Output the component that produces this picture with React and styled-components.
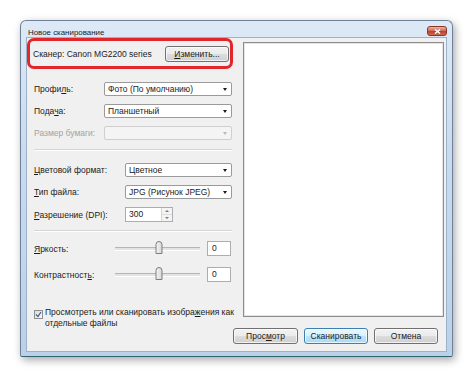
import React from 'react';
import styled, { createGlobalStyle } from 'styled-components';

const GlobalStyle = createGlobalStyle`
    html, body {
        margin: 0;
        padding: 0;
        background: #FFFFFF;
    }
    body {
        font-family: "Liberation Sans", "DejaVu Sans", sans-serif;
        font-size: 8.5px;
        color: #1b1b1b;
    }
`;

const Page = styled.div`
    width: 474px;
    height: 378px;
    box-sizing: border-box;
    padding: 20px 0 0 20px;
`;

const Window = styled.div`
    width: 433px;
    height: 337px;
    box-sizing: border-box;
    display: flex;
    flex-direction: column;
    padding: 0 5px 4px 5px;
    border: 1px solid #6f8099;
    border-bottom-color: #2f6470;
    border-radius: 6px 6px 2px 2px;
    background: linear-gradient(180deg, #dde9f6 0%, #c9dbef 40%, #bbd1ea 100%);
    box-shadow: 2px 3px 9px rgba(0, 0, 0, 0.35);
`;

const TitleBar = styled.div`
    height: 18px;
    display: flex;
    align-items: flex-end;
    justify-content: space-between;
    padding-left: 2px;
`;

const Title = styled.span`
    font-size: 7.9px;
    line-height: 9px;
    color: #1c1c1c;
`;

const CloseButton = styled.div`
    width: 20px;
    height: 10px;
    margin-bottom: 1px;
    box-sizing: border-box;
    border: 1px solid #8c3426;
    border-radius: 3px;
    background: linear-gradient(180deg, #eab3a5 0%, #d2705d 45%, #c0402c 55%, #d06a52 100%);
    display: flex;
    align-items: center;
    justify-content: center;
`;

const Client = styled.div`
    flex: 1;
    display: flex;
    flex-direction: column;
    background: #f0f0f0;
    border: 1px solid #9fb1c8;
`;

const Main = styled.div`
    flex: 1;
    display: flex;
    padding: 0 2px 0 0;
`;

const LeftPanel = styled.div`
    width: 207px;
    display: flex;
    flex-direction: column;
`;

const ScannerBox = styled.div`
    height: 31px;
    box-sizing: border-box;
    border: 3px solid #e2262b;
    border-radius: 7px;
    display: flex;
    align-items: center;
    justify-content: space-between;
    padding: 0 1px 0 3px;
    margin-right: 1px;
`;

const Button = styled.div`
    width: ${p => p.$w || 65}px;
    height: 16px;
    box-sizing: border-box;
    display: flex;
    align-items: center;
    justify-content: center;
    border: 1px solid ${p => p.$default ? '#3c7fb1' : '#707070'};
    border-radius: 3px;
    background: ${p => p.$default
        ? 'linear-gradient(180deg, #eaf6fd 0%, #d9f0fc 50%, #bee6fd 51%, #a7d9f5 100%)'
        : 'linear-gradient(180deg, #f2f2f2 0%, #ebebeb 50%, #dddddd 51%, #cfcfcf 100%)'};
    box-shadow: inset 0 0 0 1px rgba(255, 255, 255, 0.7);
    color: #1b1b1b;
`;

const Form = styled.div`
    display: flex;
    flex-direction: column;
    padding: 0 2px 0 7px;
`;

const Section = styled.div`
    display: flex;
    flex-direction: column;
    gap: ${p => p.$gap}px;
    margin-top: ${p => p.$top}px;
`;

const Row = styled.div`
    display: grid;
    grid-template-columns: ${p => p.$label}px 1fr;
    align-items: center;
    height: ${p => p.$h || 14}px;
`;

const Label = styled.span`
    color: ${p => p.$disabled ? '#a3a3a3' : '#1b1b1b'};
    white-space: nowrap;
`;

const Select = styled.div`
    height: 14px;
    box-sizing: border-box;
    display: flex;
    align-items: center;
    justify-content: space-between;
    padding: 0 4px 0 3px;
    border: 1px solid ${p => p.$disabled ? '#cfcfcf' : '#9a9a9a'};
    border-radius: 2px;
    background: ${p => p.$disabled ? '#f4f4f4' : '#ffffff'};
`;

const Arrow = styled.span`
    width: 0;
    height: 0;
    border-left: 2.5px solid transparent;
    border-right: 2.5px solid transparent;
    border-top: 3px solid ${p => p.$disabled ? '#b8b8b8' : '#1b1b1b'};
`;

const Separator = styled.div`
    height: 0;
    border-top: 1px solid #d5d5d5;
    border-bottom: 1px solid #ffffff;
    margin-top: ${p => p.$top}px;
`;

const SpinBox = styled.div`
    width: 48px;
    height: 15px;
    box-sizing: border-box;
    display: flex;
    border: 1px solid #abadb3;
    background: #ffffff;
`;

const SpinText = styled.span`
    flex: 1;
    padding-left: 3px;
    line-height: 13px;
`;

const SpinButtons = styled.div`
    width: 10px;
    display: flex;
    flex-direction: column;
    border-left: 1px solid #d6d6d6;
    background: #f4f4f4;
`;

const SpinHalf = styled.div`
    flex: 1;
    display: flex;
    align-items: center;
    justify-content: center;
    border-bottom: ${p => p.$top ? '1px solid #dcdcdc' : 'none'};
`;

const SpinArrow = styled.span`
    width: 0;
    height: 0;
    border-left: 2px solid transparent;
    border-right: 2px solid transparent;
    ${p => p.$up ? 'border-bottom: 2px solid #7a7a7a;' : 'border-top: 2px solid #7a7a7a;'}
`;

const SliderRow = styled.div`
    display: grid;
    grid-template-columns: 74px 85px 24px;
    column-gap: 7px;
    align-items: center;
    height: 15px;
`;

const Track = styled.div`
    position: relative;
    height: 2px;
    border-top: 1px solid #b5b5b5;
    border-bottom: 1px solid #ffffff;
    background: #e3e3e3;
`;

const Thumb = styled.svg`
    position: absolute;
    left: 40px;
    top: -7px;
`;

const NumberBox = styled.div`
    height: 15px;
    box-sizing: border-box;
    border: 1px solid #abadb3;
    background: #ffffff;
    padding-left: 4px;
    line-height: 13px;
`;

const CheckRow = styled.div`
    display: flex;
    align-items: flex-start;
    gap: 2px;
    margin-top: 25px;
    line-height: 10.5px;
`;

const CheckText = styled.span`
    white-space: nowrap;
`;

const CheckBox = styled.div`
    width: 9px;
    height: 9px;
    margin-top: 3px;
    flex: none;
    box-sizing: border-box;
    border: 1px solid #8e8f8f;
    background: linear-gradient(135deg, #dcdcdc, #f8f8f8);
    display: flex;
    align-items: center;
    justify-content: center;
`;

const Preview = styled.div`
    flex: 1;
    margin: 4px 0 0 9px;
    height: 275px;
    box-sizing: border-box;
    border: 1px solid #8d8d8d;
    box-shadow: inset 0 0 0 1px #e4e4e4;
    background: #ffffff;
`;

const Footer = styled.div`
    display: flex;
    justify-content: flex-end;
    gap: 6px;
    padding: 0 8px 7px 0;
`;

const u = (s) => <u>{s}</u>;

const Slider = ({ label }) => (
    <SliderRow>
        <Label>{label}</Label>
        <Track>
            <Thumb width="8" height="13" viewBox="0 0 8 13">
                <defs>
                    <linearGradient id="thumbg" x1="0" y1="0" x2="1" y2="0">
                        <stop offset="0" stopColor="#f6f6f6" />
                        <stop offset="1" stopColor="#d6d6d6" />
                    </linearGradient>
                </defs>
                <path d="M1 3.5 Q1 0.5 4 0.5 Q7 0.5 7 3.5 L7 12.5 L1 12.5 Z"
                      fill="url(#thumbg)" stroke="#7d7d7d" strokeWidth="1" />
            </Thumb>
        </Track>
        <NumberBox>0</NumberBox>
    </SliderRow>
);

const App = () => (
    <Page>
        <GlobalStyle />
        <Window>
            <TitleBar>
                <Title>Новое сканирование</Title>
                <CloseButton>
                    <svg width="7" height="5" viewBox="0 0 7 5">
                        <path d="M1 0.5 L6 4.5 M6 0.5 L1 4.5" stroke="#ffffff" strokeWidth="1.4" />
                    </svg>
                </CloseButton>
            </TitleBar>
            <Client>
                <Main>
                    <LeftPanel>
                        <ScannerBox>
                            <span>Сканер: Canon MG2200 series</span>
                            <Button $w={64}>{u('И')}зменить...</Button>
                        </ScannerBox>
                        <Form>
                            <Section $gap={8} $top={13}>
                                <Row $label={70}>
                                    <Label>Профи{u('л')}ь:</Label>
                                    <Select>Фото (По умолчанию)<Arrow /></Select>
                                </Row>
                                <Row $label={70}>
                                    <Label>Пода{u('ч')}а:</Label>
                                    <Select>Планшетный<Arrow /></Select>
                                </Row>
                                <Row $label={70}>
                                    <Label $disabled>Размер бумаги:</Label>
                                    <Select $disabled><span /><Arrow $disabled /></Select>
                                </Row>
                            </Section>
                            <Separator $top={9} />
                            <Section $gap={8} $top={12}>
                                <Row $label={91}>
                                    <Label>{u('Ц')}ветовой формат:</Label>
                                    <Select>Цветное<Arrow /></Select>
                                </Row>
                                <Row $label={91}>
                                    <Label>{u('Т')}ип файла:</Label>
                                    <Select>JPG (Рисунок JPEG)<Arrow /></Select>
                                </Row>
                                <Row $label={91} $h={15}>
                                    <Label>{u('Р')}азрешение (DPI):</Label>
                                    <SpinBox>
                                        <SpinText>300</SpinText>
                                        <SpinButtons>
                                            <SpinHalf $top><SpinArrow $up /></SpinHalf>
                                            <SpinHalf><SpinArrow /></SpinHalf>
                                        </SpinButtons>
                                    </SpinBox>
                                </Row>
                            </Section>
                            <Separator $top={8} />
                            <Section $gap={11} $top={9}>
                                <Slider label={<>{u('Я')}ркость:</>} />
                                <Slider label={<>Контрастност{u('ь')}:</>} />
                            </Section>
                            <CheckRow>
                                <CheckBox>
                                    <svg width="7" height="7" viewBox="0 0 7 7">
                                        <path d="M1 3.5 L3 5.5 L6 1" stroke="#4a5f97" strokeWidth="1.3" fill="none" />
                                    </svg>
                                </CheckBox>
                                <CheckText>Просмотреть или сканировать изобра{u('ж')}ения как<br />отдельные файлы</CheckText>
                            </CheckRow>
                        </Form>
                    </LeftPanel>
                    <Preview />
                </Main>
                <Footer>
                    <Button>Прос{u('м')}отр</Button>
                    <Button $default $w={64}>Сканировать</Button>
                    <Button $w={64}>Отмена</Button>
                </Footer>
            </Client>
        </Window>
    </Page>
);

export default App;
